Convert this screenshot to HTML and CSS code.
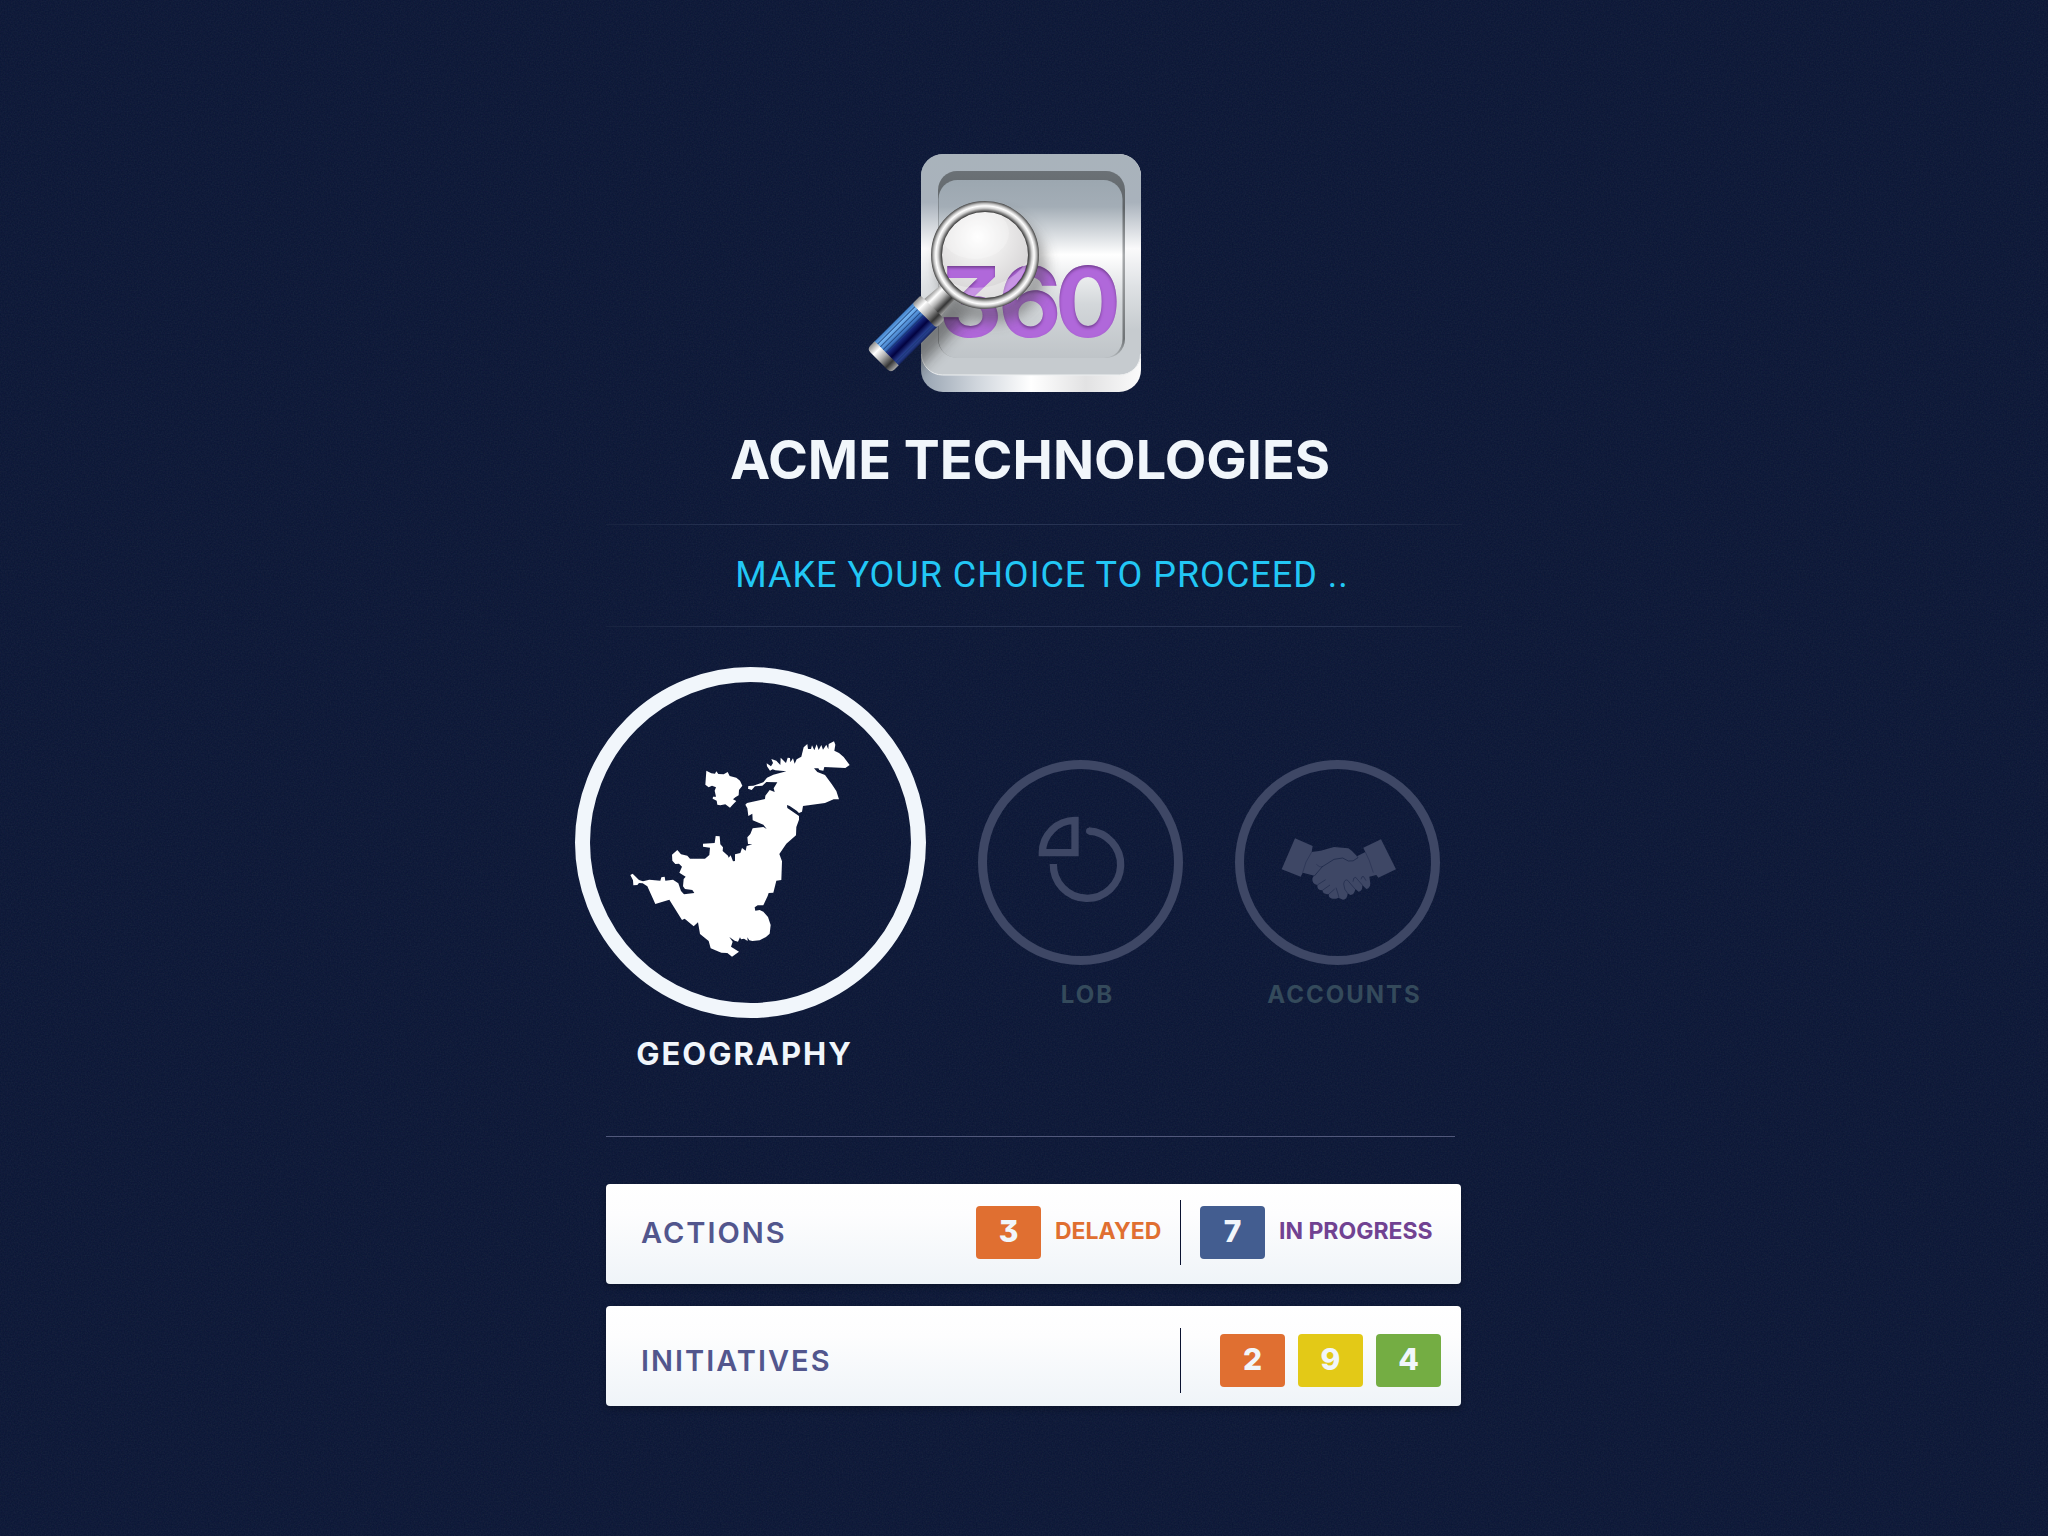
FILE: index.html
```html
<!DOCTYPE html>
<html lang="en">
<head>
<meta charset="utf-8">
<meta name="viewport" content="width=device-width, initial-scale=1">
<title>Acme Technologies 360</title>
<link rel="stylesheet" href="styles.css">
</head>
<body>
<main class="page">
  <header class="masthead">
    <svg class="logo" viewBox="864 150 340 248" role="img" aria-label="360 logo">
      <defs>
        <linearGradient id="face" x1="0" y1="154" x2="0" y2="374" gradientUnits="userSpaceOnUse">
          <stop offset="0" stop-color="#a9b3bb"/><stop offset=".22" stop-color="#a9b2bc"/>
          <stop offset=".43" stop-color="#fafafb"/><stop offset=".6" stop-color="#dfe2e5"/>
          <stop offset=".8" stop-color="#c6cbcf"/><stop offset="1" stop-color="#c6cbcf"/>
        </linearGradient>
        <linearGradient id="lip" x1="921" y1="0" x2="1141" y2="0" gradientUnits="userSpaceOnUse">
          <stop offset="0" stop-color="#97a3b1"/><stop offset=".25" stop-color="#cfd5dc"/>
          <stop offset=".5" stop-color="#fff"/><stop offset=".75" stop-color="#e2e2e3"/><stop offset="1" stop-color="#fbfbfb"/>
        </linearGradient>
        <linearGradient id="panel" x1="0" y1="180" x2="0" y2="358" gradientUnits="userSpaceOnUse">
          <stop offset="0" stop-color="#9ca7b0"/><stop offset=".15" stop-color="#a3adb6"/>
          <stop offset=".42" stop-color="#fff"/><stop offset=".7" stop-color="#d3d7da"/><stop offset="1" stop-color="#bfc4c8"/>
        </linearGradient>
        <linearGradient id="recess" x1="0" y1="171" x2="0" y2="358" gradientUnits="userSpaceOnUse">
          <stop offset="0" stop-color="#6b7176"/><stop offset=".2" stop-color="#5f6468"/><stop offset=".45" stop-color="#a9abad"/>
          <stop offset=".9" stop-color="#6f7376"/><stop offset="1" stop-color="#b5babd"/>
        </linearGradient>
        <radialGradient id="glass" cx=".42" cy=".3" r=".7">
          <stop offset="0" stop-color="#fff"/><stop offset=".5" stop-color="#e9e8e8"/><stop offset="1" stop-color="#d3d1d2"/>
        </radialGradient>
        <radialGradient id="rim" cx="985" cy="255" r="54" gradientUnits="userSpaceOnUse">
          <stop offset=".79" stop-color="#2c2c2c"/><stop offset=".82" stop-color="#6b6b6b"/><stop offset=".87" stop-color="#d5d5d5"/>
          <stop offset=".91" stop-color="#fff"/><stop offset=".95" stop-color="#c4c4c4"/><stop offset="1" stop-color="#4b4b4b"/>
        </radialGradient>
        <linearGradient id="metal">
          <stop offset="0" stop-color="#8b8b8b"/><stop offset=".25" stop-color="#fff"/><stop offset=".5" stop-color="#b0b0b0"/>
          <stop offset=".78" stop-color="#353535"/><stop offset="1" stop-color="#a8a8a8"/>
        </linearGradient>
        <linearGradient id="grip">
          <stop offset="0" stop-color="#3f7cc4"/><stop offset=".15" stop-color="#72b4f4"/><stop offset=".4" stop-color="#3d76c2"/>
          <stop offset=".52" stop-color="#15277c"/><stop offset=".68" stop-color="#02023f"/><stop offset=".88" stop-color="#2c479a"/><stop offset="1" stop-color="#14235f"/>
        </linearGradient>
        <filter id="soft" x="-30%" y="-30%" width="160%" height="160%"><feGaussianBlur stdDeviation="7"/></filter>
        <filter id="inset" x="-10%" y="-10%" width="120%" height="120%">
          <feOffset in="SourceAlpha" dy="2" result="o"/><feGaussianBlur in="o" stdDeviation="1.5" result="b"/>
          <feComposite in="SourceAlpha" in2="b" operator="out" result="edge"/>
          <feFlood flood-color="#3c1652" flood-opacity=".7"/><feComposite in2="edge" operator="in" result="s"/>
          <feMerge><feMergeNode in="SourceGraphic"/><feMergeNode in="s"/></feMerge>
        </filter>
        <clipPath id="tileClip"><rect x="921" y="154" width="220" height="238" rx="22"/></clipPath>
        <clipPath id="outsideLens"><path clip-rule="evenodd" d="M850 140H1210V400H850ZM940 255a45 45 0 1 0 90 0a45 45 0 1 0-90 0Z"/></clipPath>
      </defs>
      <rect x="921" y="154" width="220" height="238" rx="22" fill="url(#lip)"/>
      <rect x="921" y="154" width="220" height="221" rx="22" fill="url(#face)"/>
      <path d="M921.500 354a21 21 0 0 0 21 21h177a21 21 0 0 0 21-21" fill="none" stroke="#eef0f1"/>
      <rect x="938" y="171" width="187" height="187" rx="19" fill="url(#recess)"/>
      <rect x="938.500" y="180" width="184" height="178" rx="19" fill="url(#panel)"/>
      <circle cx="985" cy="255" r="45" fill="url(#glass)"/>
      <text class="logo-digits" x="939 998 1055" y="337" filter="url(#inset)">360</text>
      <g clip-path="url(#tileClip)"><g clip-path="url(#outsideLens)" opacity=".5">
        <g filter="url(#soft)"><circle cx="992" cy="268" r="46" fill="none" stroke="#444" stroke-width="16"/>
        <path d="M962 304L896 374" stroke="#222" stroke-width="26"/></g>
      </g></g>
      <ellipse cx="975" cy="233" rx="34" ry="26" fill="#fff" opacity=".25"/>
      <path d="M952 283a43 43 0 0 0 75-22a58 52 0 0 1-75 22z" fill="#fff" opacity=".3"/>
      <g transform="translate(985 255) rotate(45)">
        <path d="M-10 52H10L12 76H-12Z" fill="url(#metal)"/>
        <rect x="-17" y="84" width="34" height="57" fill="url(#grip)"/>
        <path d="M-13 86V140M-9 86V140M-5 86V140M-1 86V140M13 86V140" stroke="#133064" stroke-width="1" opacity=".65"/>
        <rect x="-17" y="74" width="34" height="12" rx="3" fill="url(#metal)"/>
        <path d="M-17 139H17V145Q17 150 12 150H-12Q-17 150-17 145Z" fill="url(#metal)"/>
      </g>
      <circle cx="985" cy="255" r="48.500" fill="none" stroke="url(#rim)" stroke-width="11"/>
    </svg>
    <h1 class="title">ACME TECHNOLOGIES</h1>
    <p class="prompt">MAKE YOUR CHOICE TO PROCEED ..</p>
  </header>

  <nav class="choices" aria-label="Choose a view">
    <a class="choice choice-active" href="#geography" aria-current="true">
      <span class="ring">
        <svg width="260" height="250" viewBox="33 -8 780 750" aria-hidden="true">
          <path fill="#fff" d="M289 150L304 158L315 159L319 152L325 160L341 161L353 154L359 166L379 171L390 180L397 195L387 208L386 224L376 230L369 236L379 241L368 252L360 261L346 251L331 254L322 252L320 240L308 234L309 228L318 228L314 210L318 200L306 195L296 200L286 192Z"/>
          <path fill="#fff" d="M672 62L676 72L673 90L687 97L701 109L719 133L706 142L643 139L640 150L628 148L625 143L612 143L622 154L645 163L665 190L679 211L687 236L671 236L645 247L579 256L576 273L567 277L560 270L539 256L531 253L532 262L567 286L567 297L559 319L558 344L529 369L508 400L516 422L514 478L499 480L490 516L476 517L473 526L460 554L443 554L434 560L436 570L449 568L460 573L474 589L482 613L479 639L468 649L449 659L427 661L418 659L412 650L413 661L402 654L393 656L390 650L384 663L374 660L358 649L368 663L363 678L387 693L366 708L352 697L334 696L302 683L296 661L270 640L264 605L251 617L224 594L216 598L178 537L136 550L112 497L98 488L87 487L82 493L70 494L69 479L61 463L68 459L87 478L99 482L118 477L151 480L154 470L164 468L166 480L189 477L205 488L213 511L222 521L253 517L247 508L225 505L219 497L221 475L227 468L208 456L216 438L207 429L196 430L187 420L186 402L202 388L213 401L232 405L240 414L285 414L298 403L300 381L279 378V369L314 367L317 346L329 347L331 371L339 380L338 391L354 405L356 411L362 404L369 422L375 421V401L391 397L396 382L407 390L410 376L427 371L414 370L412 350L421 340L428 323L460 319L470 325L460 312L428 299L427 279L415 286L412 263L406 252L411 247L465 235L466 225L479 208L494 214L491 203L502 185L469 184L457 195L435 197L425 208L414 204L415 196L430 195L460 185L471 171L490 162L529 152L496 149L488 146L480 150L471 137L470 128L483 137L489 127L484 115L499 120L511 133L512 111L528 127L533 111L540 112L541 125L549 113L554 129L560 116L574 108L581 80L592 70L594 85L603 85L606 74L613 89L620 71L626 88L634 73L639 87L649 72L655 86L656 70Z"/>
        </svg>
      </span>
      <span class="choice-label">GEOGRAPHY</span>
    </a>
    <a class="choice" href="#lob">
      <span class="ring">
        <svg width="90" height="100" viewBox="229 217 270 300" fill="none" stroke="currentColor" stroke-width="22" aria-hidden="true">
          <path d="M346 239V336H248A98 98 0 0 1 346 239Z"/>
          <path d="M387 271A101 101 0 1 1 281 370"/>
          <circle cx="389" cy="271" r="10" fill="currentColor" stroke="none"/>
        </svg>
      </span>
      <span class="choice-label">LOB</span>
    </a>
    <a class="choice" href="#accounts">
      <span class="ring">
        <svg width="120" height="80" viewBox="22 7 360 240" aria-hidden="true">
          <path fill="currentColor" d="M73 53L126 76L123 94L150 90L190 79L233 83L244 91L259 107L284 94L278 81L331 56L376 146L323 171L317 163L296 168L299 188Q298 204 287 205L275 193Q276 212 264 213L254 205Q252 222 239 223L231 218Q230 237 217 237L203 231Q192 237 181 233Q172 229 175 220Q158 223 155 209Q138 209 140 193Q124 190 125 174Q127 167 131 165L96 156L90 168L33 146Z"/>
          <g fill="none" stroke="#172244" stroke-width="2">
            <path d="M131 166L155 138L190 116L216 112L233 121Q247 125 262 111L259 107"/>
            <path opacity=".6" d="M123 94L106 124L96 156M284 94L296 120L308 156M137 131L148 139L157 137"/>
            <path opacity=".8" d="M140 193L165 177M155 209L178 193M175 220L192 205M196 201Q202 218 205 231M219 190Q220 208 231 218M219 190Q222 174 231 179L253 205M247 183Q248 168 255 170L275 193M271 176Q273 164 279 168L286 180"/>
          </g>
        </svg>
      </span>
      <span class="choice-label">ACCOUNTS</span>
    </a>
  </nav>

  <hr class="rule">

  <section class="cards" aria-label="Summary">
    <article class="card">
      <h2 class="card-title">ACTIONS</h2>
      <div class="status delayed"><span class="badge orange">3</span><span class="status-label">DELAYED</span></div>
      <div class="status split progress"><span class="badge blue">7</span><span class="status-label">IN PROGRESS</span></div>
    </article>
    <article class="card card-low">
      <h2 class="card-title">INITIATIVES</h2>
      <div class="status split counts"><span class="badge orange">2</span><span class="badge yellow">9</span><span class="badge green">4</span></div>
    </article>
  </section>
</main>
</body>
</html>
```
FILE: styles.css
```css
* { box-sizing: border-box; }

body {
  margin: 0;
  min-height: 100vh;
  color: #f1f6fb;
  font-family: Inter, "Liberation Sans", sans-serif;
  font-feature-settings: "cv09";
  background-color: #081434;
  background-image: url("data:image/svg+xml,%3Csvg xmlns='http://www.w3.org/2000/svg' width='256' height='256'%3E%3Cfilter id='n'%3E%3CfeTurbulence type='fractalNoise' baseFrequency='.7' numOctaves='2' stitchTiles='stitch'/%3E%3C/filter%3E%3Crect width='256' height='256' filter='url(%23n)' opacity='.08'/%3E%3C/svg%3E");
}

.page {
  width: 100%;
  max-width: 938px;
  margin: 0 auto;
  padding: 150px 0 120px 20px;
}

.masthead {
  display: flex;
  flex-direction: column;
  align-items: center;
  padding: 0 31px;
}

.logo { width: 340px; max-width: 100%; height: auto; display: block; }

.logo-digits {
  font-family: Inter, sans-serif;
  font-size: 98px;
  font-weight: 700;
  fill: #b067da;
}

.title {
  margin: 30px 0 32px;
  padding-right: 8px;
  font-size: 54px;
  line-height: 64px;
  font-weight: 700;
  text-align: center;
}

.prompt {
  align-self: stretch;
  margin: 0;
  padding: 27px 0 28px 16px;
  border: 1px solid;
  border-width: 1px 0;
  border-image: linear-gradient(90deg, #17223f, #273353 15%, #273353 85%, #17223f) 1;
  color: #22c7f5;
  font-family: Roboto, sans-serif;
  font-size: 36px;
  line-height: 46px;
  letter-spacing: 1px;
  text-align: center;
}

.choices {
  display: flex;
  align-items: flex-start;
  gap: 52px;
  margin-top: 40px;
}

.choice {
  display: flex;
  flex-direction: column;
  align-items: center;
  gap: 14px;
  padding-top: 93px;
  color: #3e4765;
  text-decoration: none;
}

.ring {
  display: flex;
  align-items: center;
  justify-content: center;
  width: 205px;
  height: 205px;
  border: 9px solid;
  border-radius: 50%;
}

.choice-label {
  padding-left: 14px;
  color: #344a5b;
  font-size: 24px;
  line-height: 32px;
  font-weight: 700;
  letter-spacing: 2px;
}

.choice-active { gap: 20px; padding-top: 0; color: #f1f6fb; }
.choice-active .ring { width: 351px; height: 351px; border-width: 15px; }
.choice-active .choice-label {
  padding: 0 12px 0 0;
  color: #f1f6fb;
  font-size: 31px;
}

.rule {
  height: 1px;
  margin: 66px 38px 47px 31px;
  border: 0;
  background: #51587b;
}

.cards {
  display: grid;
  gap: 22px;
  padding: 0 32px 0 31px;
}

.card {
  display: grid;
  grid-template-columns: 1fr 204px 261px;
  align-items: center;
  min-height: 100px;
  padding: 0 20px 3px 35px;
  border-radius: 4px;
  background: linear-gradient(#fff, #fdfdfe 30%, #eff4f8);
  box-shadow: 0 3px 6px rgba(0, 0, 0, .25);
}

.card-low { grid-template-columns: 1fr 261px; padding-top: 12px; }

.card-title {
  margin: 0;
  color: #52568d;
  font-size: 29px;
  line-height: 36px;
  font-weight: 600;
  letter-spacing: 2px;
}

.status { display: flex; align-items: center; gap: 14px; height: 65px; }
.split { padding-left: 19px; border-left: 1px solid #0a1230; }
.counts { justify-content: flex-end; gap: 13px; }

.status-label {
  padding-bottom: 3px;
  font-size: 23px;
  line-height: 32px;
  font-weight: 700;
  white-space: nowrap;
}
.delayed { color: #e06f31; }
.progress { color: #714292; }

.badge {
  flex: none;
  width: 65px;
  height: 53px;
  border-radius: 4px;
  color: #f1f6fb;
  font-size: 30px;
  line-height: 50px;
  font-weight: 800;
  text-align: center;
}
.orange { background: #e06f31; }
.blue { background: #435d90; }
.yellow { background: #e3c917; }
.green { background: #74ad43; }
```
